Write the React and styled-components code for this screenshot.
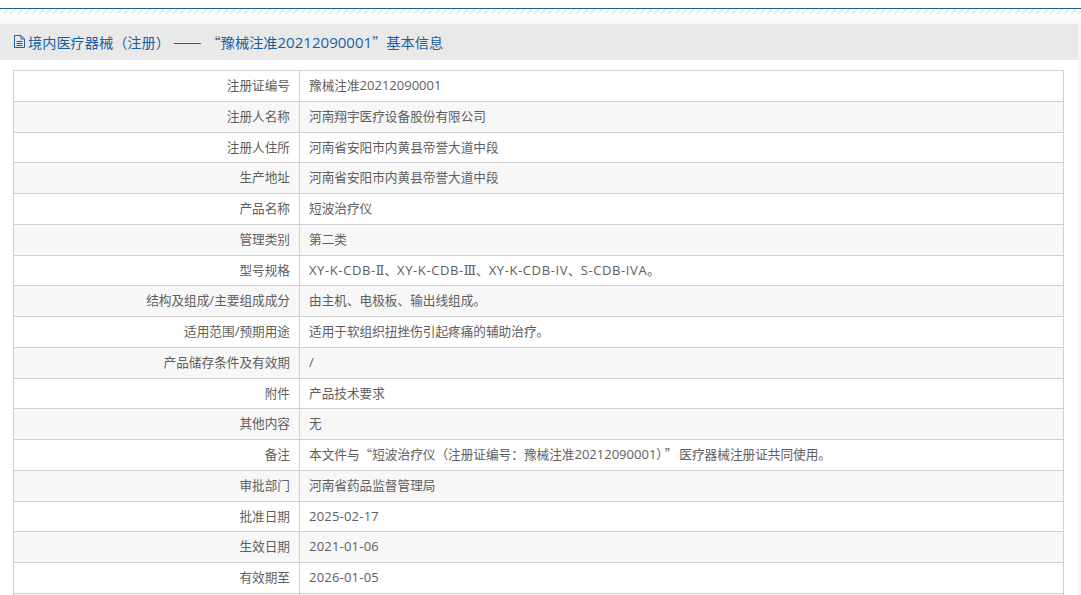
import React from "react";
import styled, { createGlobalStyle } from "styled-components";

const rows = [
  ["注册证编号", "豫械注准20212090001"],
  ["注册人名称", "河南翔宇医疗设备股份有限公司"],
  ["注册人住所", "河南省安阳市内黄县帝誉大道中段"],
  ["生产地址", "河南省安阳市内黄县帝誉大道中段"],
  ["产品名称", "短波治疗仪"],
  ["管理类别", "第二类"],
  ["型号规格", "XY-K-CDB-Ⅱ、XY-K-CDB-Ⅲ、XY-K-CDB-IV、S-CDB-IVA。"],
  ["结构及组成/主要组成成分", "由主机、电极板、输出线组成。"],
  ["适用范围/预期用途", "适用于软组织扭挫伤引起疼痛的辅助治疗。"],
  ["产品储存条件及有效期", "/"],
  ["附件", "产品技术要求"],
  ["其他内容", "无"],
  ["备注", "本文件与“短波治疗仪（注册证编号：豫械注准20212090001）”医疗器械注册证共同使用。"],
  ["审批部门", "河南省药品监督管理局"],
  ["批准日期", "2025-02-17"],
  ["生效日期", "2021-01-06"],
  ["有效期至", "2026-01-05"],
  ["", ""],
];

const trackingOf = (part) => {
  if (/[A-Z]/.test(part)) return "0.6px";
  if (part.includes("-")) return "0.2px";
  return "0";
};

// latin runs are set a bit larger than the chinese around them
function Mixed({ text }) {
  return text.split(/([A-Za-z0-9\-/]+|[ⅡⅢ]|——|）”)/).map((part, i) => {
    if (i % 2 === 0) return part;
    if (part === "——") return <Dash key={i}>{part}</Dash>;
    if (part === "）”") return <CloseQuote key={i}>{part}</CloseQuote>;
    if (/[ⅡⅢ]/.test(part)) return <Roman key={i}>{part}</Roman>;
    return <Latin key={i} $tracking={trackingOf(part)}>{part}</Latin>;
  });
}

export default function App() {
  return (
    <>
      <GlobalStyle />
      <TopBar />
      <Hatch />
      <Fade />
      <Panel>
        <PanelTitle>
          <FileIcon />
          <span>
            <Mixed text="境内医疗器械（注册） ——“豫械注准20212090001”基本信息" />
          </span>
        </PanelTitle>
        <InfoTable>
          <tbody>
            {rows.map(([label, value], i) => (
              <Row key={i} $striped={i % 2 === 1}>
                <Label><Mixed text={label} /></Label>
                <Value><Mixed text={value} /></Value>
              </Row>
            ))}
          </tbody>
        </InfoTable>
      </Panel>
    </>
  );
}

function FileIcon() {
  return (
    <IconSvg viewBox="0 0 11 13" fill="none" stroke="currentColor" strokeWidth="1">
      <path d="M.5 .5h6.5l3.5 3.5v8.5h-10z" />
      <path d="M7 .5v3.5h3.5M2.5 6.5h6M2.5 8.5h6M2.5 10.5h6" />
    </IconSvg>
  );
}

const GlobalStyle = createGlobalStyle`
  html, body {
    margin: 0;
    height: 595px;
    overflow: hidden;
    background: #f6f6f6;
  }
  body {
    font-family: "Noto Sans CJK SC", "Open Sans", sans-serif;
  }
`;

const TopBar = styled.div`
  height: 9px;
  background: #fff;
  border-bottom: 1px solid #1f5f8f;
  box-sizing: border-box;
`;

const Hatch = styled.div`
  height: 5px;
  background: repeating-linear-gradient(135deg, #e2eff6 0 2px, #fff 2px 5px);
`;

const Fade = styled.div`
  height: 10px;
  background: linear-gradient(#fff, #f6f6f6);
`;

const Panel = styled.div`
  width: 1078px;
  height: 571px;
  background: #fff;
  overflow: hidden;
`;

const Latin = styled.span`
  font-family: "Open Sans", sans-serif;
  font-size: 1.03em;
  letter-spacing: ${(p) => p.$tracking};
`;

const Roman = styled.span`
  font-family: "DejaVu Serif", serif;
  font-size: 1em;
`;

const Dash = styled.span`
  font-size: 17px;
  line-height: 1;
  margin-right: 5px;
`;

const CloseQuote = styled.span`
  letter-spacing: 2px;
`;

const PanelTitle = styled.h2`
  display: flex;
  align-items: center;
  gap: 3px;
  height: 36px;
  margin: 0 0 10px;
  padding: 0 0 1px 14px;
  box-sizing: border-box;
  background: #e9e9e9;
  color: #1c5f9e;
  font-size: 14.2px;
  font-weight: 400;
  white-space: pre;

  ${Latin} {
    font-size: 1.06em;
  }
`;

const IconSvg = styled.svg`
  width: 11px;
  height: 13px;
`;

const InfoTable = styled.table`
  width: 1051px;
  margin-left: 13px;
  border-collapse: collapse;
  table-layout: fixed;
  color: #5e5e5e;
  font-size: 12.65px;
`;

const Row = styled.tr`
  height: 30.75px;
  background: ${(p) => (p.$striped ? "#f7f7f7" : "#fff")};
`;

const Label = styled.td`
  width: 276px;
  padding: 0 9px 2.5px 0;
  border: 1px solid #d0d0d0;
  text-align: right;
`;

const Value = styled.td`
  padding: 0 9px 2.5px;
  border: 1px solid #d0d0d0;
`;
